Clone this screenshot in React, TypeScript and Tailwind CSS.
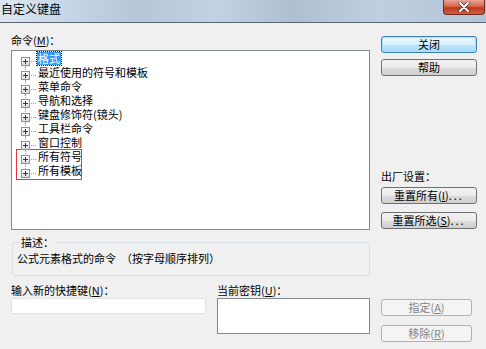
import React from "react";

const font = { fontFamily: '"Noto Sans CJK SC", "Liberation Sans", sans-serif' };

const items = [
  "格式",
  "最近使用的符号和模板",
  "菜单命令",
  "导航和选择",
  "键盘修饰符(镜头)",
  "工具栏命令",
  "窗口控制",
  "所有符号",
  "所有模板",
];

function Key({ k }: { k: string }) {
  return <span className="underline underline-offset-1">{k}</span>;
}

function PlusBox() {
  return (
    <span className="relative z-10 mt-[5px] flex h-[9px] w-[9px] items-center justify-center border border-[#919191] bg-[linear-gradient(#ffffff,#d8dde3)]">
      <svg width="5" height="5" viewBox="0 0 5 5">
        <path d="M0 2.5H5M2.5 0V5" stroke="#1b3a66" strokeWidth="1" />
      </svg>
    </span>
  );
}

function TreeRow({ text, idx, last }: { text: string; idx: number; last: boolean }) {
  const selected = idx === 0;
  return (
    <div className="flex h-[14px] items-start">
      <span className="relative flex h-full w-[9px] justify-center">
        <span
          className={
            "absolute left-[4px] border-l border-dotted border-[#a0a0a0] " +
            (idx === 0 ? "top-[9px] bottom-0" : last ? "top-0 h-[9px]" : "top-0 bottom-0")
          }
        />
        <PlusBox />
      </span>
      <span className="ml-[1px] mt-[9px] w-[5px] border-t border-dotted border-[#a0a0a0]" />
      <span
        className={
          "ml-[1px] px-[1px] text-[11px] leading-[13px] " +
          (selected
            ? "bg-[#3399ff] text-white outline outline-1 outline-dotted outline-[#1a1a1a]"
            : "text-black")
        }
      >
        {text}
      </span>
    </div>
  );
}

function Btn({
  children,
  primary,
  disabled,
  className,
}: {
  children: React.ReactNode;
  primary?: boolean;
  disabled?: boolean;
  className?: string;
}) {
  let tone =
    "border-[#707070] bg-[linear-gradient(#f2f2f2_0%,#ebebeb_50%,#dddddd_51%,#cfcfcf_100%)] text-black";
  if (primary)
    tone =
      "border-[#3c7fb1] bg-[linear-gradient(#eaf6fd_0%,#d9f0fc_50%,#bee6fd_51%,#a7d9f5_100%)] text-black shadow-[inset_0_0_0_1px_#9ee6ff]";
  if (disabled) tone = "border-[#adb2b5] bg-[#f4f4f4] text-[#838383]";
  return (
    <div
      className={
        "flex h-[17px] items-center justify-center rounded-[3px] border text-[11px] leading-[13px] " +
        tone +
        " " +
        (className ?? "w-[96px]")
      }
    >
      {children}
    </div>
  );
}

export default function App() {
  return (
    <div className="relative h-[349px] w-[486px] overflow-hidden bg-[#f0f0f0]" style={font}>
      {/* title bar */}
      <div className="relative flex h-[23px] items-start border-b border-[#5b6570] bg-[linear-gradient(90deg,#dce7f3_0%,#c9d8e8_12%,#b6c6d8_28%,#c3d2e2_45%,#aebfd2_60%,#bfcfe0_78%,#b3c4d6_100%)]">
        <span className="pl-[1px] pt-[2px] text-[12px] leading-[14px] text-black">自定义键盘</span>
        <div className="ml-auto mr-[1px] flex h-[15px] w-[42px] items-center justify-center rounded-b-[4px] border border-t-0 border-[#6b2a22] bg-[linear-gradient(#e9a596_0%,#d6684f_45%,#c1381c_55%,#d0603f_100%)]">
          <svg width="12" height="10" viewBox="0 0 12 10">
            <path d="M2 1L10 9M10 1L2 9" stroke="#4a2a24" strokeWidth="3.4" strokeLinecap="round" />
            <path d="M2 1L10 9M10 1L2 9" stroke="#ffffff" strokeWidth="2" strokeLinecap="round" />
          </svg>
        </div>
      </div>

      <div className="flex">
        {/* left column */}
        <div className="ml-[11px] w-[359px]">
          <div className="mt-[10px] text-[11px] leading-[14px] text-black">
            命令(<Key k="M" />)：
          </div>
          <div className="mt-[3px] h-[180px] border border-[#828790] bg-white pl-[9px] pt-[1px]">
            {items.slice(0, 7).map((t, i) => (
              <TreeRow key={t} text={t} idx={i} last={false} />
            ))}
            <div className="relative">
              <span className="absolute -left-[5px] -top-[1px] -bottom-[2px] w-[66px] border border-[#e8343a]" />
              {items.slice(7).map((t, i) => (
                <TreeRow key={t} text={t} idx={i + 7} last={i === 1} />
              ))}
            </div>
          </div>

          <div className="relative ml-[1px] mt-[12px] h-[34px] rounded-[3px] border border-[#d5dfe5] pl-[4px] pt-[9px]">
            <span className="absolute -top-[8px] left-[7px] bg-[#f0f0f0] px-[1px] text-[11px] leading-[14px] text-black">
              描述：
            </span>
            <div className="text-[11px] leading-[13px] text-black">
              公式元素格式的命令{"\u00a0\u00a0"}（按字母顺序排列）
            </div>
          </div>

          <div className="mt-[7px] flex gap-[11px]">
            <div className="w-[195px]">
              <div className="text-[11px] leading-[14px] text-black">
                输入新的快捷键(<Key k="N" />)：
              </div>
              <div className="mt-[1px] h-[16px] rounded-[2px] border border-[#dfe3e8] bg-white" />
            </div>
            <div className="w-[153px]">
              <div className="text-[11px] leading-[14px] text-black">
                当前密钥(<Key k="U" />)：
              </div>
              <div className="mt-[1px] h-[36px] border border-[#828790] bg-white" />
            </div>
          </div>
        </div>

        {/* right column */}
        <div className="ml-[11px] flex w-[96px] flex-col">
          <Btn primary className="mt-[13px] w-[96px]">关闭</Btn>
          <Btn className="mt-[6px] w-[96px]">帮助</Btn>
          <div className="mt-[93px] text-[11px] leading-[14px] text-black">出厂设置：</div>
          <Btn className="mt-[4px] w-[96px]">
            重置所有(<Key k="I" />)<span className="tracking-[2px]">...</span>
          </Btn>
          <Btn className="mt-[8px] w-[96px]">
            重置所选(<Key k="S" />)<span className="tracking-[2px]">...</span>
          </Btn>
          <Btn disabled className="mt-[70px] w-[91px]">
            指定(<Key k="A" />)
          </Btn>
          <Btn disabled className="mt-[9px] w-[91px]">
            移除(<Key k="R" />)
          </Btn>
        </div>
      </div>
    </div>
  );
}
